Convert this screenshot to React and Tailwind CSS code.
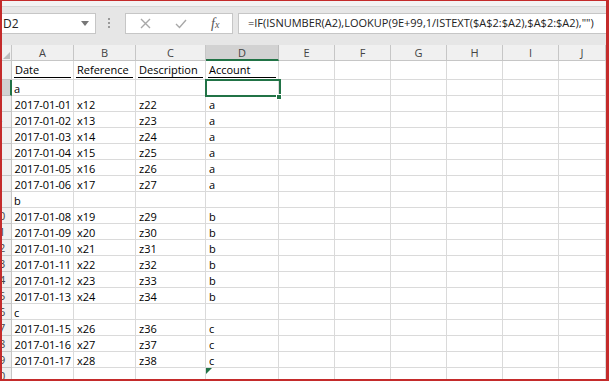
import React from 'react';

const COLS = [
  { id: 'A', w: 'w-[62px]' },
  { id: 'B', w: 'w-[62px]' },
  { id: 'C', w: 'w-[70px]' },
  { id: 'D', w: 'w-[73px]' },
  { id: 'E', w: 'w-[56px]' },
  { id: 'F', w: 'w-[56px]' },
  { id: 'G', w: 'w-[56px]' },
  { id: 'H', w: 'w-[56px]' },
  { id: 'I', w: 'w-[56px]' },
  { id: 'J', w: 'w-[47px]' },
];

const HEAD = ['Date', 'Reference', 'Description', 'Account'];

// rows 2..20
const DATA = [
  ['a'],
  ['2017-01-01', 'x12', 'z22', 'a'],
  ['2017-01-02', 'x13', 'z23', 'a'],
  ['2017-01-03', 'x14', 'z24', 'a'],
  ['2017-01-04', 'x15', 'z25', 'a'],
  ['2017-01-05', 'x16', 'z26', 'a'],
  ['2017-01-06', 'x17', 'z27', 'a'],
  ['b'],
  ['2017-01-08', 'x19', 'z29', 'b'],
  ['2017-01-09', 'x20', 'z30', 'b'],
  ['2017-01-10', 'x21', 'z31', 'b'],
  ['2017-01-11', 'x22', 'z32', 'b'],
  ['2017-01-12', 'x23', 'z33', 'b'],
  ['2017-01-13', 'x24', 'z34', 'b'],
  ['c'],
  ['2017-01-15', 'x26', 'z36', 'c'],
  ['2017-01-16', 'x27', 'z37', 'c'],
  ['2017-01-17', 'x28', 'z38', 'c'],
  [],
];

function RowHead({ n, sel }) {
  return (
    <div className={`w-[10px] h-full flex-none overflow-hidden border-b text-[11px] leading-[16px] text-[#444] ${sel ? 'bg-[#d2d2d2] border-r-2 border-r-[#217346] border-b-[#bdbdbd]' : 'bg-[#f0f0f0] border-r border-[#c6c6c6]'}`}>
      <div className="w-[26px] -ml-[16px] text-center">{n}</div>
    </div>
  );
}

function DataRow({ n, vals }) {
  return (
    <div className="h-[16px] flex flex-none">
      <RowHead n={n} sel={n === 2} />
      {COLS.map((c, i) => {
        const v = vals[i];
        const isNum = v && /^\d/.test(v);
        return (
          <div key={c.id} className={`${c.w} h-full flex-none relative border-r border-b border-[#dadada] pt-[1px] leading-[15px] whitespace-nowrap ${isNum ? 'text-right pr-[2px] tracking-[-0.1px]' : i === 0 ? 'pl-[2px]' : 'pl-[3px]'}`}>
            {v}
            {n === 2 && c.id === 'D' && (
              <>
                <div className="absolute -left-[1px] -top-[1px] w-[76px] h-[18px] border-2 border-[#217346] z-10" />
                <div className="absolute -right-[4px] -bottom-[5px] w-[6px] h-[6px] bg-[#217346] border border-white z-20" />
              </>
            )}
            {n === 20 && c.id === 'D' && (
              <svg className="absolute left-0 top-0" width="6" height="6" viewBox="0 0 6 6">
                <polygon points="0,0 6,0 0,6" fill="#217346" />
              </svg>
            )}
          </div>
        );
      })}
    </div>
  );
}

export default function App() {
  return (
    <div className="w-[609px] h-[381px] overflow-hidden bg-white border-t border-l-2 border-r-[3px] border-b-2 border-[#c42b2b] flex flex-col font-['Open_Sans',sans-serif] text-[11px] text-black">
      {/* ribbon edge */}
      <div className="h-[6px] flex-none bg-[#f3f3f3] border-b border-[#d6d6d6]" />

      {/* formula bar */}
      <div className="h-[38px] flex-none bg-[#e6e6e6] flex items-start pt-[6px]">
        <div className="w-[94px] h-[21px] bg-white border border-l-0 border-[#c6c6c6] flex items-center justify-between pl-[1px] pr-[6px] text-[12px] text-[#222]">
          <span>D2</span>
          <svg width="8" height="5" viewBox="0 0 8 5"><polygon points="0,0 8,0 4,5" fill="#777" /></svg>
        </div>
        <div className="ml-[12px] mt-[5px] flex flex-col gap-[2px]">
          <span className="w-[2px] h-[2px] bg-[#9a9a9a]" />
          <span className="w-[2px] h-[2px] bg-[#9a9a9a]" />
          <span className="w-[2px] h-[2px] bg-[#9a9a9a]" />
        </div>
        <div className="ml-[15px] w-[108px] h-[21px] bg-white border border-[#c6c6c6] flex items-center">
          <svg className="ml-[14px]" width="11" height="11" viewBox="0 0 11 11">
            <path d="M1 1 L10 10 M10 1 L1 10" stroke="#a8a8a8" strokeWidth="1.4" />
          </svg>
          <svg className="ml-[24px]" width="12" height="10" viewBox="0 0 12 10">
            <path d="M1 5 L4.5 8.5 L11 1" stroke="#a8a8a8" strokeWidth="1.4" fill="none" />
          </svg>
          <span className="ml-[24px] font-['Liberation_Serif',serif] italic text-[14px] text-[#555] leading-none">f<span className="text-[10px]">x</span></span>
        </div>
        <div className="ml-[5px] flex-1 h-[21px] bg-white border border-r-0 border-[#c6c6c6] flex items-center pl-[9px] text-[11px] text-[#222] whitespace-nowrap overflow-hidden">
          =IF(ISNUMBER(A2),LOOKUP(9E+99,1/ISTEXT($A$2:$A2),$A$2:$A2),"")
        </div>
      </div>

      {/* column headers */}
      <div className="h-[16px] flex flex-none">
        <div className="w-[10px] h-full flex-none bg-[#f0f0f0] border-r border-b border-[#c6c6c6] relative">
          <svg className="absolute right-[1px] bottom-[1px]" width="7" height="7" viewBox="0 0 7 7">
            <polygon points="7,0 7,7 0,7" fill="#bcbcbc" />
          </svg>
        </div>
        {COLS.map(c => (
          <div key={c.id} className={`${c.w} h-full flex-none text-center leading-[15px] text-[#444] border-r ${c.id === 'D' ? 'bg-[#d2d2d2] border-b-2 border-b-[#217346] border-r-[#bdbdbd]' : 'bg-[#f0f0f0] border-b border-[#c6c6c6]'}`}>
            {c.id}
          </div>
        ))}
      </div>

      {/* row 1 */}
      <div className="h-[19px] flex flex-none">
        <RowHead n={1} />
        {COLS.map((c, i) => (
          <div key={c.id} className={`${c.w} h-full flex-none border-r border-b border-[#dadada]`}>
            {HEAD[i] && (
              <div className="mx-[2px] h-[17px] border-b border-black pt-[1px] leading-[15px] pl-[1px] whitespace-nowrap">{HEAD[i]}</div>
            )}
          </div>
        ))}
      </div>

      {DATA.map((vals, i) => <DataRow key={i} n={i + 2} vals={vals} />)}
    </div>
  );
}
